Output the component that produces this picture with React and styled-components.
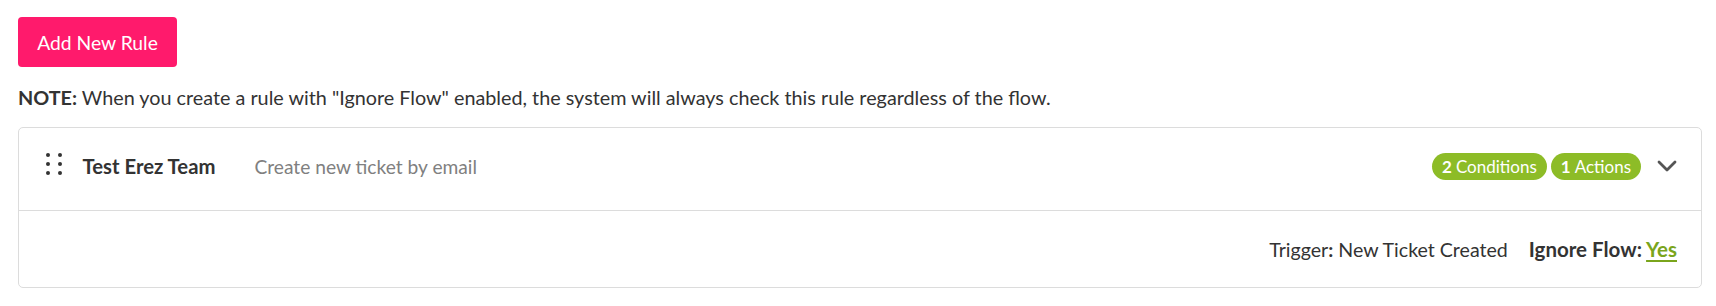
import React from "react";
import styled, { createGlobalStyle } from "styled-components";

const Global = createGlobalStyle`
  html, body { margin: 0; padding: 0; background: #fff; }
  body { font-family: Lato, "Liberation Sans", sans-serif; color: #333; }
`;

const Page = styled.div`
  padding: 17px 14px 20px 18px;
  display: flex;
  flex-direction: column;
  align-items: flex-start;
`;

const PrimaryButton = styled.button`
  height: 50px;
  width: 159px;
  border: none;
  border-radius: 4px;
  background: #ff1a6c;
  color: #fff;
  font-family: inherit;
  font-size: 19.3px;
  padding: 0;
  cursor: pointer;
`;

const Note = styled.p`
  margin: 15px 0 0;
  font-size: 19.8px;
  line-height: 30px;
  color: #333;
  strong { font-weight: 700; }
`;

const Card = styled.div`
  align-self: stretch;
  margin-top: 15px;
  border: 1px solid #dcdcdc;
  border-radius: 5px;
  background: #fff;
`;

const Header = styled.div`
  display: flex;
  align-items: center;
  box-sizing: border-box;
  height: 83px;
  padding: 0 24px 6px 27px;
  border-bottom: 1px solid #dcdcdc;
`;

const Handle = styled.div`
  display: grid;
  grid-template-columns: repeat(2, 4px);
  grid-auto-rows: 4px;
  column-gap: 7.5px;
  row-gap: 5px;
  margin-right: 21px;
  margin-top: -5px;
`;

const Dot = styled.span`
  width: 4px;
  height: 4px;
  border-radius: 50%;
  background: #333;
`;

const Title = styled.span`
  font-weight: 700;
  font-size: 20.3px;
  color: #333;
  margin-right: 39px;
`;

const Subtitle = styled.span`
  font-size: 19.2px;
  color: #808080;
  flex: 1;
`;

const Badges = styled.div`
  display: flex;
  gap: 4px;
  margin-right: 16px;
`;

const Badge = styled.span`
  display: inline-flex;
  align-items: center;
  height: 27px;
  padding: 0 10px;
  border-radius: 14px;
  background: #8dbc27;
  color: #fff;
  font-size: 17px;
  b { font-weight: 700; margin-right: 4px; }
`;

const Chevron = styled.svg`
  width: 20px;
  height: 12px;
  display: block;
`;

const Footer = styled.div`
  display: flex;
  justify-content: flex-end;
  align-items: center;
  height: 76px;
  padding: 0 24px;
  font-size: 19.6px;
  color: #333;
  gap: 21px;
`;

const Meta = styled.span`
  b { font-weight: 700; }
`;

const Label = styled.span`
  font-weight: 700;
  font-size: 20.5px;
`;

const YesLink = styled.a`
  color: #7aa51c;
  font-weight: 700;
  font-size: 20.5px;
  text-decoration: underline;
  text-decoration-thickness: 2px;
  text-underline-offset: 3px;
`;

export default function App() {
  return (
    <>
      <Global />
      <Page>
        <PrimaryButton>Add New Rule</PrimaryButton>
        <Note>
          <strong>NOTE:</strong> When you create a rule with "Ignore Flow" enabled, the system will always check this rule regardless of the flow.
        </Note>
        <Card>
          <Header>
            <Handle>
              {Array.from({ length: 6 }).map((_, i) => (
                <Dot key={i} />
              ))}
            </Handle>
            <Title>Test Erez Team</Title>
            <Subtitle>Create new ticket by email</Subtitle>
            <Badges>
              <Badge><b>2</b>Conditions</Badge>
              <Badge><b>1</b>Actions</Badge>
            </Badges>
            <Chevron viewBox="0 0 20 12" fill="none">
              <path d="M2 2 L10 10 L18 2" stroke="#555" strokeWidth="2.8" strokeLinecap="round" strokeLinejoin="round" />
            </Chevron>
          </Header>
          <Footer>
            <Meta>Trigger<b>:</b> New Ticket Created</Meta>
            <Meta>
              <Label>Ignore Flow: </Label>
              <YesLink href="#">Yes</YesLink>
            </Meta>
          </Footer>
        </Card>
      </Page>
    </>
  );
}
